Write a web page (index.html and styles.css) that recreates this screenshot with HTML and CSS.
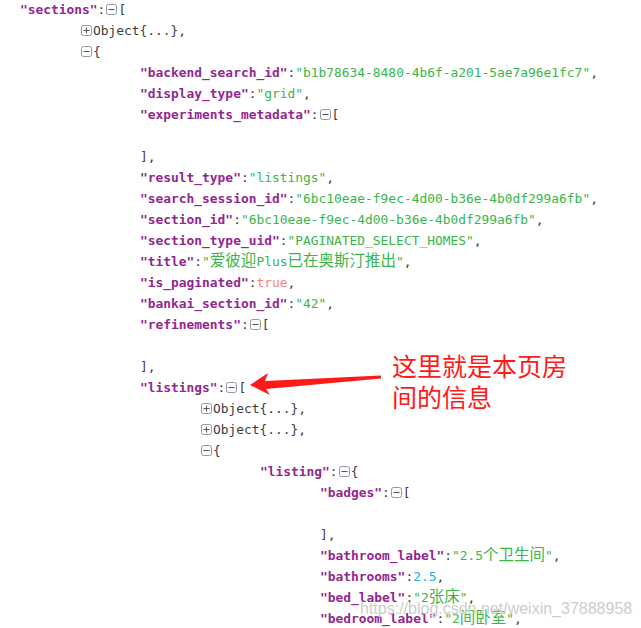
FILE: index.html
```html
<!DOCTYPE html>
<html lang="zh">
<head>
<meta charset="utf-8">
<title>JSON</title>
<link rel="stylesheet" href="styles.css">
</head>
<body>
<div class="json">
  <div class="ln l0"><span class="k">"sections"</span><span class="p">:</span><svg class="tog" width="11" height="11" viewBox="0 0 11 11"><rect x="0.5" y="0.5" width="10" height="10" rx="2" fill="#fbfbfb" stroke="#8f9aa6"/><path d="M2.5 5.5h6" stroke="#555" stroke-width="1"/></svg><span class="p">[</span></div>
  <div class="ln l1"><svg class="tog" width="11" height="11" viewBox="0 0 11 11"><rect x="0.5" y="0.5" width="10" height="10" rx="2" fill="#fbfbfb" stroke="#8f9aa6"/><path d="M2.5 5.5h6M5.5 2.5v6" stroke="#555" stroke-width="1"/></svg><span class="p">Object{...},</span></div>
  <div class="ln l1"><svg class="tog" width="11" height="11" viewBox="0 0 11 11"><rect x="0.5" y="0.5" width="10" height="10" rx="2" fill="#fbfbfb" stroke="#8f9aa6"/><path d="M2.5 5.5h6" stroke="#555" stroke-width="1"/></svg><span class="p">{</span></div>
  <div class="ln l2"><span class="k">"backend_search_id"</span><span class="p">:</span><span class="s">"b1b78634-8480-4b6f-a201-5ae7a96e1fc7"</span><span class="p">,</span></div>
  <div class="ln l2"><span class="k">"display_type"</span><span class="p">:</span><span class="s">"grid"</span><span class="p">,</span></div>
  <div class="ln l2"><span class="k">"experiments_metadata"</span><span class="p">:</span><svg class="tog" width="11" height="11" viewBox="0 0 11 11"><rect x="0.5" y="0.5" width="10" height="10" rx="2" fill="#fbfbfb" stroke="#8f9aa6"/><path d="M2.5 5.5h6" stroke="#555" stroke-width="1"/></svg><span class="p">[</span></div>
  <div class="ln l2"></div>
  <div class="ln l2"><span class="p">],</span></div>
  <div class="ln l2"><span class="k">"result_type"</span><span class="p">:</span><span class="s">"listings"</span><span class="p">,</span></div>
  <div class="ln l2"><span class="k">"search_session_id"</span><span class="p">:</span><span class="s">"6bc10eae-f9ec-4d00-b36e-4b0df299a6fb"</span><span class="p">,</span></div>
  <div class="ln l2"><span class="k">"section_id"</span><span class="p">:</span><span class="s">"6bc10eae-f9ec-4d00-b36e-4b0df299a6fb"</span><span class="p">,</span></div>
  <div class="ln l2"><span class="k">"section_type_uid"</span><span class="p">:</span><span class="s">"PAGINATED_SELECT_HOMES"</span><span class="p">,</span></div>
  <div class="ln l2"><span class="k">"title"</span><span class="p">:</span><span class="s">"<span class="cjk">爱彼迎</span>Plus<span class="cjk">已在奥斯汀推出</span>"</span><span class="p">,</span></div>
  <div class="ln l2"><span class="k">"is_paginated"</span><span class="p">:</span><span class="b">true</span><span class="p">,</span></div>
  <div class="ln l2"><span class="k">"bankai_section_id"</span><span class="p">:</span><span class="s">"42"</span><span class="p">,</span></div>
  <div class="ln l2"><span class="k">"refinements"</span><span class="p">:</span><svg class="tog" width="11" height="11" viewBox="0 0 11 11"><rect x="0.5" y="0.5" width="10" height="10" rx="2" fill="#fbfbfb" stroke="#8f9aa6"/><path d="M2.5 5.5h6" stroke="#555" stroke-width="1"/></svg><span class="p">[</span></div>
  <div class="ln l2"></div>
  <div class="ln l2"><span class="p">],</span></div>
  <div class="ln l2"><span class="k">"listings"</span><span class="p">:</span><svg class="tog" width="11" height="11" viewBox="0 0 11 11"><rect x="0.5" y="0.5" width="10" height="10" rx="2" fill="#fbfbfb" stroke="#8f9aa6"/><path d="M2.5 5.5h6" stroke="#555" stroke-width="1"/></svg><span class="p">[</span></div>
  <div class="ln l3"><svg class="tog" width="11" height="11" viewBox="0 0 11 11"><rect x="0.5" y="0.5" width="10" height="10" rx="2" fill="#fbfbfb" stroke="#8f9aa6"/><path d="M2.5 5.5h6M5.5 2.5v6" stroke="#555" stroke-width="1"/></svg><span class="p">Object{...},</span></div>
  <div class="ln l3"><svg class="tog" width="11" height="11" viewBox="0 0 11 11"><rect x="0.5" y="0.5" width="10" height="10" rx="2" fill="#fbfbfb" stroke="#8f9aa6"/><path d="M2.5 5.5h6M5.5 2.5v6" stroke="#555" stroke-width="1"/></svg><span class="p">Object{...},</span></div>
  <div class="ln l3"><svg class="tog" width="11" height="11" viewBox="0 0 11 11"><rect x="0.5" y="0.5" width="10" height="10" rx="2" fill="#fbfbfb" stroke="#8f9aa6"/><path d="M2.5 5.5h6" stroke="#555" stroke-width="1"/></svg><span class="p">{</span></div>
  <div class="ln l4"><span class="k">"listing"</span><span class="p">:</span><svg class="tog" width="11" height="11" viewBox="0 0 11 11"><rect x="0.5" y="0.5" width="10" height="10" rx="2" fill="#fbfbfb" stroke="#8f9aa6"/><path d="M2.5 5.5h6" stroke="#555" stroke-width="1"/></svg><span class="p">{</span></div>
  <div class="ln l5"><span class="k">"badges"</span><span class="p">:</span><svg class="tog" width="11" height="11" viewBox="0 0 11 11"><rect x="0.5" y="0.5" width="10" height="10" rx="2" fill="#fbfbfb" stroke="#8f9aa6"/><path d="M2.5 5.5h6" stroke="#555" stroke-width="1"/></svg><span class="p">[</span></div>
  <div class="ln l5"></div>
  <div class="ln l5"><span class="p">],</span></div>
  <div class="ln l5"><span class="k">"bathroom_label"</span><span class="p">:</span><span class="s">"2.5<span class="cjk">个卫生间</span>"</span><span class="p">,</span></div>
  <div class="ln l5"><span class="k">"bathrooms"</span><span class="p">:</span><span class="n">2.5</span><span class="p">,</span></div>
  <div class="ln l5"><span class="k">"bed_label"</span><span class="p">:</span><span class="s">"2<span class="cjk">张床</span>"</span><span class="p">,</span></div>
  <div class="ln l5"><span class="k">"bedroom_label"</span><span class="p">:</span><span class="s">"2<span class="cjk">间卧室</span>"</span><span class="p">,</span></div>
</div>

<svg class="arrow" width="140" height="30" viewBox="245 370 140 30">
  <polygon points="250,385 268,373 265,381 381,375.5 381,378.5 266,389 270,395" fill="#ff1a1a"/>
</svg>
<div class="note">这里就是本页房<br>间的信息</div>
<div class="mark">https://blog.csdn.net/weixin_37888958</div>
</body>
</html>
```

FILE: styles.css
```css
html, body {
  margin: 0;
  padding: 0;
  background: #ffffff;
  overflow: hidden;
}

body {
  width: 641px;
  height: 628px;
  position: relative;
}

.json {
  margin-top: -1.5px;
  font-family: "DejaVu Sans Mono", "Liberation Mono", "Noto Sans CJK SC", monospace;
  font-size: 12.9px;
  color: #3c3c3c;
}

.ln {
  height: 21px;
  line-height: 21px;
  white-space: pre;
}

.l0 { padding-left: 20px; }
.l1 { padding-left: 80px; }
.l2 { padding-left: 140px; }
.l3 { padding-left: 200px; }
.l4 { padding-left: 260px; }
.l5 { padding-left: 320px; }

.k {
  color: #92278f;
  font-weight: bold;
}

.p {
  color: #3c3c3c;
}

.s {
  color: #3ab54a;
}

.b {
  color: #f98280;
}

.n {
  color: #25aae1;
}

.cjk {
  font-family: "Noto Sans CJK SC", sans-serif;
  font-size: 15.5px;
  line-height: 1;
}

.tog {
  display: inline-block;
  vertical-align: -1px;
  margin: 0 1px 0 1px;
}

.arrow {
  position: absolute;
  left: 245px;
  top: 370px;
}

.note {
  position: absolute;
  left: 392px;
  top: 350px;
  font-family: "Noto Sans CJK SC", sans-serif;
  font-size: 25px;
  line-height: 31px;
  color: #ff1a1a;
}

.mark {
  position: absolute;
  left: 360px;
  top: 601px;
  font-family: "Liberation Sans", Arial, sans-serif;
  font-size: 16px;
  line-height: 16px;
  color: #cdcdcd;
  text-shadow: 0 0 1px #ffffff;
  white-space: nowrap;
}
```
